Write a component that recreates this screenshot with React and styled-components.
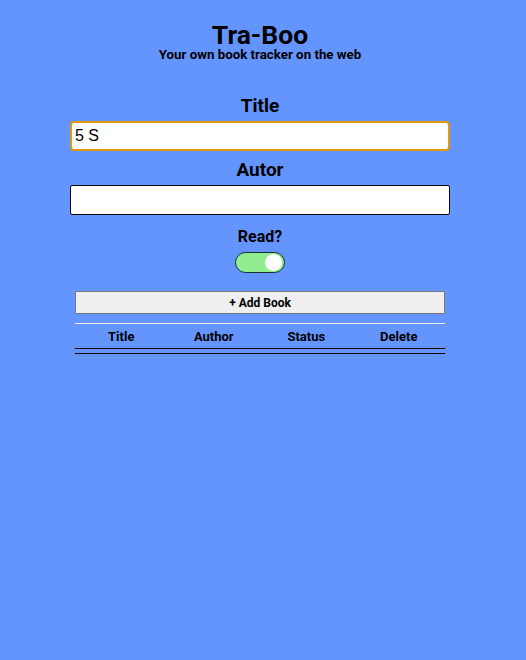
import React, { useState } from "react";
import styled, { createGlobalStyle } from "styled-components";

const Global = createGlobalStyle`
  html, body { margin: 0; padding: 0; background: #6495ff; }
  body { font-family: Roboto, "Liberation Sans", sans-serif; color: #000; }
`;

const Page = styled.div`
  width: 520px;
  display: flex;
  flex-direction: column;
  align-items: center;
  padding-top: 22px;
`;

const Header = styled.header`
  display: flex;
  flex-direction: column;
  align-items: center;
`;

const AppTitle = styled.h1`
  margin: 0;
  font-size: 26.5px;
  line-height: 26px;
  font-weight: 700;
`;

const Subtitle = styled.p`
  margin: 0;
  font-size: 13.3px;
  line-height: 13px;
  font-weight: 700;
`;

const Form = styled.form`
  margin-top: 33px;
  display: flex;
  flex-direction: column;
  align-items: center;
  width: 380px;
`;

const Label = styled.label`
  font-size: ${(p) => p.$size}px;
  font-weight: 700;
  line-height: 24px;
  margin-top: ${(p) => p.$top || 0}px;
`;

const TextInput = styled.input`
  box-sizing: border-box;
  width: 380px;
  height: 30px;
  margin-top: 3px;
  padding: 0 ${(p) => (p.$active ? 3 : 4)}px;
  font-family: "Liberation Sans", Arial, sans-serif;
  font-size: 16px;
  color: #000;
  background: #fff;
  border: ${(p) => (p.$active ? "2px solid #e0980f" : "1px solid #000")};
  border-radius: ${(p) => (p.$active ? 4 : 2)}px;
  outline: none;
  caret-color: #000;
`;

const Toggle = styled.button`
  position: relative;
  box-sizing: border-box;
  width: 50px;
  height: 21px;
  margin-top: 3px;
  padding: 0;
  border: 1.5px solid #1a2a33;
  border-radius: 11px;
  background: ${(p) => (p.$on ? "#90ee90" : "#ccc")};
  cursor: pointer;
`;

const Knob = styled.span`
  position: absolute;
  top: 1px;
  left: ${(p) => (p.$on ? 29 : 1)}px;
  width: 17px;
  height: 17px;
  border-radius: 50%;
  background: #fff;
`;

const Section = styled.section`
  width: 370px;
  margin-top: 18px;
  display: flex;
  flex-direction: column;
`;

const AddButton = styled.button`
  box-sizing: border-box;
  width: 370px;
  height: 23px;
  background: #efefef;
  border: 1px solid #767676;
  border-radius: 1px;
  font-family: Roboto, "Liberation Sans", sans-serif;
  font-size: 12px;
  font-weight: 700;
  color: #000;
  padding: 0;
`;

const Table = styled.table`
  margin-top: 9px;
  width: 370px;
  border-collapse: collapse;
  table-layout: fixed;
  border-top: 1px solid #f0f0f0;
  border-bottom: 1px solid #000;
`;

const Th = styled.th`
  font-size: 13px;
  font-weight: 700;
  height: 24px;
  padding: 0;
  text-align: center;
  border-bottom: 1px solid #000;
`;

const Spacer = styled.td`
  height: 4px;
  padding: 0;
`;

export default function App() {
  const [read, setRead] = useState(true);
  const [title, setTitle] = useState("5 S");
  const [author, setAuthor] = useState("");
  return (
    <>
      <Global />
      <Page>
        <Header>
          <AppTitle>Tra-Boo</AppTitle>
          <Subtitle>Your own book tracker on the web</Subtitle>
        </Header>
        <Form onSubmit={(e) => e.preventDefault()}>
          <Label $size={19} htmlFor="title">Title</Label>
          <TextInput id="title" $active autoFocus value={title} onChange={(e) => setTitle(e.target.value)} />
          <Label $size={19} $top={7} htmlFor="autor">Autor</Label>
          <TextInput id="autor" value={author} onChange={(e) => setAuthor(e.target.value)} />
          <Label $size={16} $top={10}>Read?</Label>
          <Toggle type="button" $on={read} onClick={() => setRead(!read)} aria-label="Read?">
            <Knob $on={read} />
          </Toggle>
        </Form>
        <Section>
          <AddButton type="button">+ Add Book</AddButton>
          <Table>
            <thead>
              <tr>
                <Th>Title</Th>
                <Th>Author</Th>
                <Th>Status</Th>
                <Th>Delete</Th>
              </tr>
            </thead>
            <tbody>
              <tr>
                <Spacer colSpan={4} />
              </tr>
            </tbody>
          </Table>
        </Section>
      </Page>
    </>
  );
}
